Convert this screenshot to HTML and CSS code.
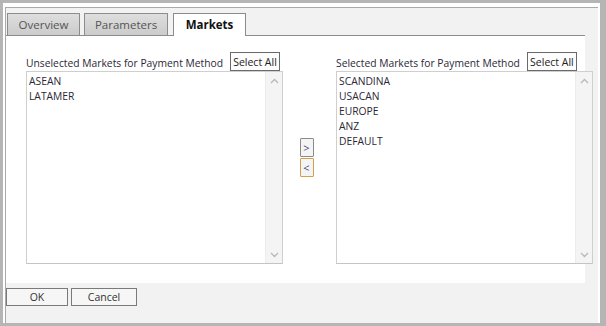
FILE: index.html
```html
<!DOCTYPE html>
<html lang="en">
<head>
    <meta charset="UTF-8">
    <title>Payment Method Markets</title>
    <link rel="stylesheet" href="styles.css">
</head>
<body>

<div class="frame">
    <div class="dialog">

        <!-- Tabs -->
        <div class="tabs">
            <div class="tab">Overview</div>
            <div class="tab">Parameters</div>
            <div class="tab active">Markets</div>
        </div>

        <!-- Markets panel -->
        <div class="panel">
            <div class="column">
                <div class="column-head">
                    <span class="label">Unselected Markets for Payment Method</span>
                    <button class="select-all">Select All</button>
                </div>
                <div class="listbox">
                    <ul class="items">
                        <li>ASEAN</li>
                        <li>LATAMER</li>
                    </ul>
                    <div class="scrollbar">
                        <svg width="9" height="6" viewBox="0 0 9 6"><path d="M1 5 L4.5 1.5 L8 5" fill="none" stroke="#b8b8b8" stroke-width="1.3"/></svg>
                        <svg width="9" height="6" viewBox="0 0 9 6"><path d="M1 1 L4.5 4.5 L8 1" fill="none" stroke="#b8b8b8" stroke-width="1.3"/></svg>
                    </div>
                </div>
            </div>

            <div class="movers">
                <button class="move">&gt;</button>
                <button class="move focused">&lt;</button>
            </div>

            <div class="column">
                <div class="column-head">
                    <span class="label">Selected Markets for Payment Method</span>
                    <button class="select-all">Select All</button>
                </div>
                <div class="listbox">
                    <ul class="items">
                        <li>SCANDINA</li>
                        <li>USACAN</li>
                        <li>EUROPE</li>
                        <li>ANZ</li>
                        <li>DEFAULT</li>
                    </ul>
                    <div class="scrollbar">
                        <svg width="9" height="6" viewBox="0 0 9 6"><path d="M1 5 L4.5 1.5 L8 5" fill="none" stroke="#b8b8b8" stroke-width="1.3"/></svg>
                        <svg width="9" height="6" viewBox="0 0 9 6"><path d="M1 1 L4.5 4.5 L8 1" fill="none" stroke="#b8b8b8" stroke-width="1.3"/></svg>
                    </div>
                </div>
            </div>
        </div>

        <!-- Dialog buttons -->
        <div class="actions">
            <button class="action">OK</button>
            <button class="action">Cancel</button>
        </div>

    </div>
</div>

</body>
</html>
```

FILE: styles.css
```css
body {
    margin: 0;
    padding: 0;
    background-color: #b5b5b5; /* Outer gray frame */
    font-family: "Open Sans", "Noto Sans", sans-serif;
    color: #2b2836;
}

.frame {
    width: 597px;
    height: 320px;
    margin: 3px 0 0 3px;
    padding: 4px 2px 0 2px;
    box-sizing: border-box;
    background-color: #ffffff;
}

.dialog {
    height: 316px;
    border-top: 1px solid #a9a9a9;
    border-left: 1px solid #a9a9a9;
    background-color: #f2f2f2;
    padding-top: 5px;
    box-sizing: border-box;
}

/* Tabs */
.tabs {
    display: flex;
    gap: 4px;
    padding-left: 1px;
    height: 22px;
}

.tab {
    height: 22px;
    box-sizing: border-box;
    border: 1px solid #8c8c8c;
    border-bottom: none;
    background: linear-gradient(#dedede, #cbcbcb);
    color: #555;
    font-size: 11.5px;
    line-height: 21px;
    text-align: center;
}

.tab:nth-child(1) { width: 73px; }
.tab:nth-child(2) { width: 84px; }

.tab.active {
    width: 73px;
    height: 23px;
    margin-left: 1px;
    background: #ffffff;
    color: #111;
    font-weight: bold;
    position: relative;
    z-index: 1;
}

.panel {
    display: flex;
    width: 579px;
    height: 248px;
    box-sizing: border-box;
    border-top: 1px solid #8c8c8c;
    background-color: #ffffff;
    padding: 16px 0 0 20px;
}

.column {
    flex-shrink: 0;
    width: 257px;
}

.column-head {
    display: flex;
    align-items: center;
    gap: 7px;
    height: 19px;
}

.label {
    font-size: 10.3px;
    padding-top: 2px;
}

.select-all {
    width: 50px;
    height: 19px;
    padding: 0;
    border: 1px solid #6a6a6a;
    background: #fdfdfd;
    font-family: inherit;
    font-size: 10.5px;
    color: #222;
}

.listbox {
    display: flex;
    height: 193px;
    box-sizing: border-box;
    border: 1px solid #cfcfcf;
    border-bottom-color: #c4c4c4;
    background: #ffffff;
}

.items {
    flex: 1;
    margin: 0;
    padding: 2px 2px;
    list-style: none;
    font-size: 10.3px;
    line-height: 15px;
}

.scrollbar {
    width: 17px;
    display: flex;
    flex-direction: column;
    justify-content: space-between;
    align-items: center;
    background: #f4f4f4;
    border-left: 1px solid #ececec;
    padding: 6px 0 5px;
    box-sizing: border-box;
}

.movers {
    flex-shrink: 0;
    width: 53px;
    display: flex;
    flex-direction: column;
    align-items: center;
    padding-top: 86px;
    padding-right: 6px;
    box-sizing: border-box;
}

.move {
    width: 14px;
    height: 19px;
    padding: 0;
    border: 1px solid #8a8a8a;
    border-radius: 1px;
    background: #f4f4f4;
    color: #4a4a7a;
    font-family: inherit;
    font-size: 11px;
}

.move.focused {
    border-color: #d2a04a;
    margin-top: 1px;
}

/* Bottom buttons */
.actions {
    display: flex;
    gap: 3px;
    padding-top: 5px;
}

.action {
    width: 62px;
    height: 18px;
    padding: 0;
    border: 1px solid #7a7a7a;
    background: #f6f6f6;
    font-family: inherit;
    font-size: 10.5px;
    color: #333;
}

.action:nth-child(2) { width: 66px; }
```
